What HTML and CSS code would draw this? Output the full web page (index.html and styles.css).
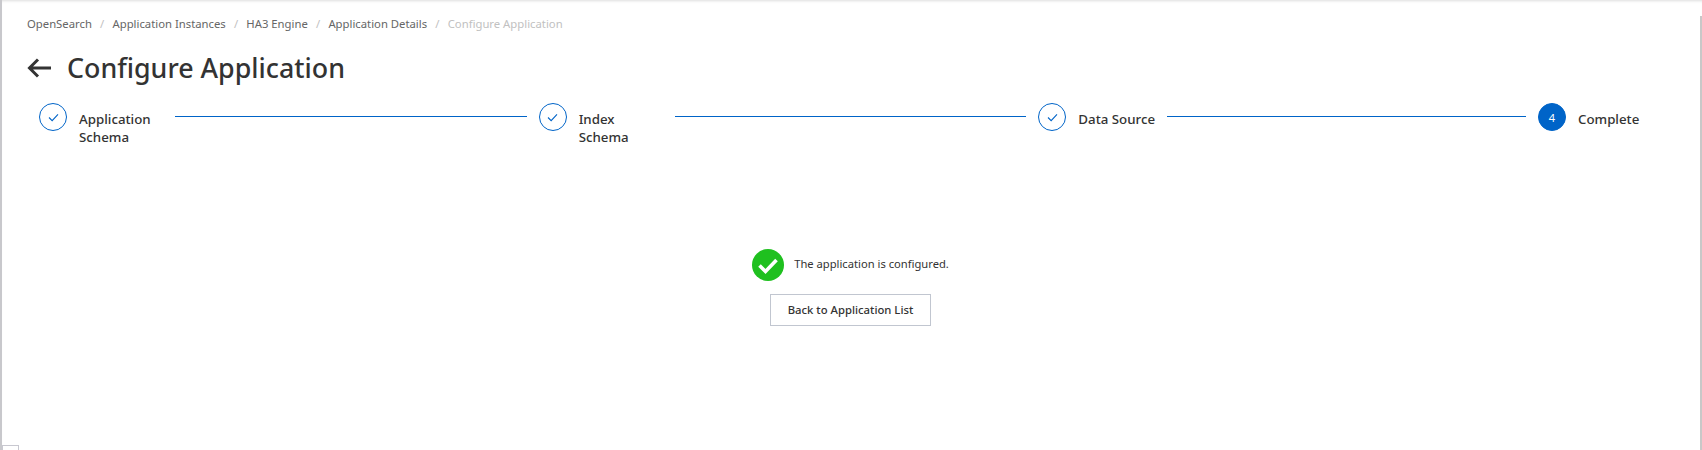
FILE: index.html
```html
<!DOCTYPE html>
<html lang="en">
<head>
<meta charset="utf-8">
<title>Configure Application</title>
<link rel="stylesheet" href="styles.css">
</head>
<body>
<div class="frame">
  <main class="page">
    <nav class="crumbs">
      <a>OpenSearch</a><span class="sep">/</span>
      <a>Application Instances</a><span class="sep">/</span>
      <a>HA3 Engine</a><span class="sep">/</span>
      <a>Application Details</a><span class="sep">/</span>
      <span class="current">Configure Application</span>
    </nav>
    <header class="head">
      <svg class="back" viewBox="0 0 24 20" width="24" height="20"><path d="M24 10H2.500M11 1.500 2.500 10l8.500 8.500" fill="none" stroke="#333" stroke-width="3"/></svg>
      <h1>Configure Application</h1>
    </header>
    <ol class="steps">
      <li class="step">
        <span class="dot"><svg viewBox="0 0 12 10" width="11" height="9"><path d="M1 5l3.500 3.500L11 1.500" fill="none" stroke="#0064c8" stroke-width="1.200"/></svg></span>
        <span class="label">Application Schema</span><span class="line"></span>
      </li>
      <li class="step">
        <span class="dot"><svg viewBox="0 0 12 10" width="11" height="9"><path d="M1 5l3.500 3.500L11 1.500" fill="none" stroke="#0064c8" stroke-width="1.200"/></svg></span>
        <span class="label narrow">Index Schema</span><span class="line"></span>
      </li>
      <li class="step">
        <span class="dot"><svg viewBox="0 0 12 10" width="11" height="9"><path d="M1 5l3.500 3.500L11 1.500" fill="none" stroke="#0064c8" stroke-width="1.200"/></svg></span>
        <span class="label">Data Source</span><span class="line"></span>
      </li>
      <li class="step last">
        <span class="dot active">4</span>
        <span class="label">Complete</span>
      </li>
    </ol>
    <section class="result">
      <div class="message">
        <svg viewBox="0 0 32 32" width="32" height="32"><circle cx="16" cy="16" r="16" fill="#1fc01f"/><path d="M7.500 16.500l6 6L24.500 11" fill="none" stroke="#fff" stroke-width="3.600"/></svg>
        <span class="note">The application is configured.</span>
      </div>
      <button class="btn" type="button">Back to Application List</button>
    </section>
  </main>
  <div class="scroll"></div>
</div>
<div class="corner"></div>
</body>
</html>
```
FILE: styles.css
```css
* { box-sizing: border-box; }
html, body { margin: 0; height: 450px; overflow: hidden; background: #fff; }
body { font-family: "Noto Sans", "Open Sans", sans-serif; color: #333; position: relative; }
.frame { display: flex; height: 450px; border-left: 2px solid #c8c8cc; box-shadow: inset 0 3px 3px -2px #ddd; }
.page { flex: 1; padding: 15px 26px 0 25px; min-width: 0; }
.crumbs { display: flex; align-items: center; height: 16px; font-size: 11.300px; color: #666; }
.sep { margin: 0 8.200px; color: #c1c1c1; }
.current { color: #c1c1c1; }
.head { display: flex; align-items: center; gap: 16px; margin-top: 13px; height: 48px; }
.back { flex: none; }
h1 { margin: 0; font-size: 26.800px; font-weight: 500; line-height: 48px; color: #333; }
.steps { display: flex; list-style: none; margin: 11px 0 0; padding: 0 0 0 12px; }
.step { display: flex; align-items: flex-start; width: 499.670px; flex: none; }
.step.last { width: auto; }
.dot { flex: none; display: flex; align-items: center; justify-content: center; width: 28px; height: 28px; border: 1px solid #0064c8; border-radius: 50%; }
.dot.active { background: #0064c8; color: #fff; font-size: 11px; }
.label { margin: 7px 12px 0; max-width: 84px; font-size: 13.300px; font-weight: 500; line-height: 18px; }
.label.narrow { width: 60px; margin-right: 36px; }
.line { flex: 1; height: 1px; margin: 13px 12px 0 0; background: #0064c8; }
.result { display: flex; flex-direction: column; align-items: center; margin-top: 103px; }
.message { display: flex; align-items: center; gap: 10px; font-size: 11.200px; height: 32px; }
.note { padding-bottom: 3px; }
.btn { width: 161px; height: 32px; margin-top: 13px; padding: 0 0 2px; background: #fff; border: 1px solid #c1c6d0; font: 500 11.300px "Noto Sans", sans-serif; color: #333; }
.scroll { width: 2px; margin-top: 16px; background: #c8c8c8; flex: none; }
.corner { position: absolute; left: 2px; bottom: 0; width: 17px; height: 5px; border: 1px solid #c8c8d0; border-bottom: 0; background: #fff; }
```
